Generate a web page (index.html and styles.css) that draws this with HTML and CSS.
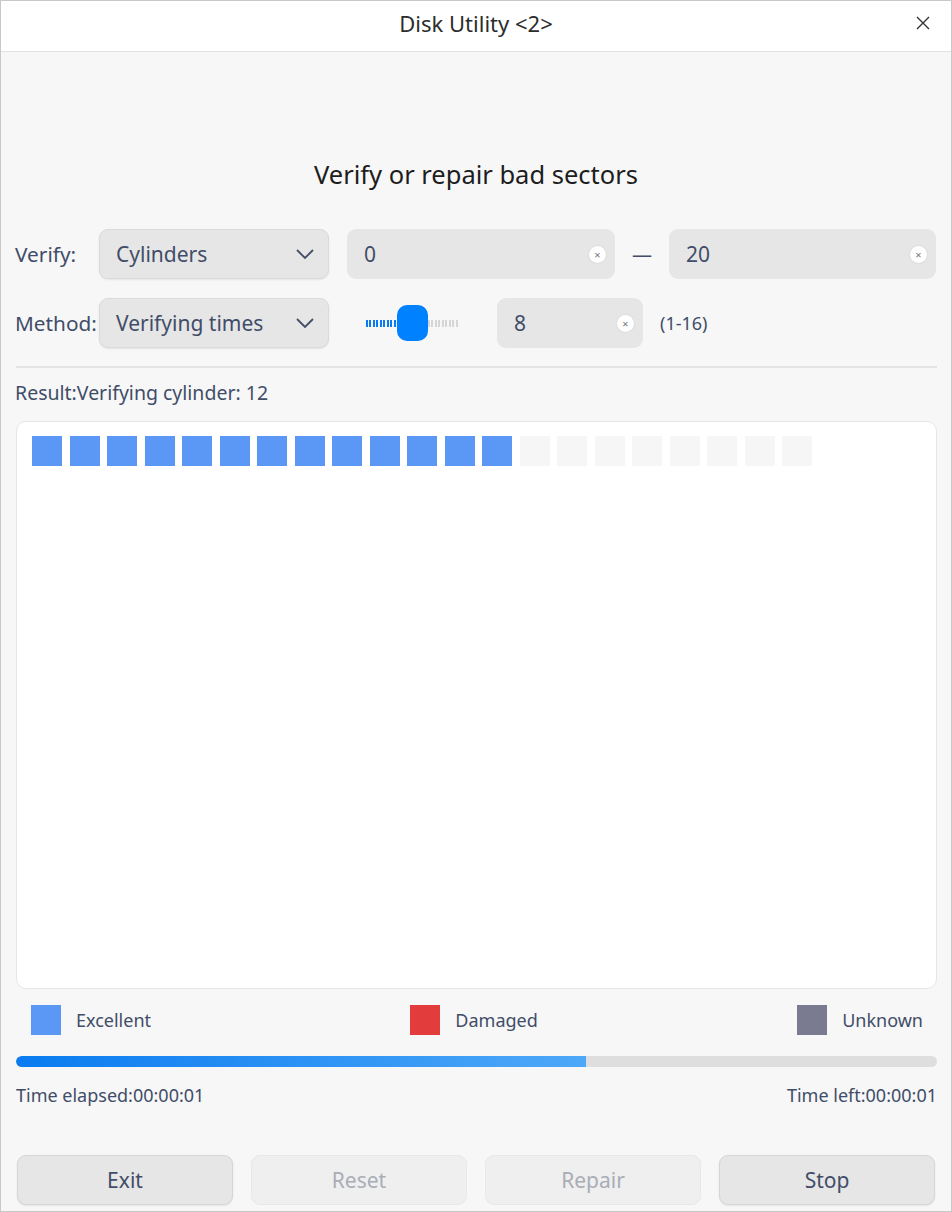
FILE: index.html
```html
<!DOCTYPE html>
<html>
<head>
<meta charset="utf-8">
<link rel="stylesheet" href="styles.css">
</head>
<body>
<div class="window">
  <div class="titlebar">
    <span class="title">Disk Utility &lt;2&gt;</span>
    <span class="close">
      <svg width="14" height="14" viewBox="0 0 14 14"><path d="M1 1 L13 13 M13 1 L1 13" stroke="#333" stroke-width="1.4" fill="none"/></svg>
    </span>
  </div>
  <div class="content">
    <h1 class="heading">Verify or repair bad sectors</h1>

    <div class="row row1">
      <span class="label">Verify:</span>
      <div class="combo">
        <span>Cylinders</span>
        <svg class="chev" width="18" height="10" viewBox="0 0 18 10"><path d="M1 1 L9 9 L17 1" stroke="#414d68" stroke-width="1.8" fill="none"/></svg>
      </div>
      <div class="input in-from"><span>0</span><span class="clear">×</span></div>
      <span class="dash">—</span>
      <div class="input in-to"><span>20</span><span class="clear">×</span></div>
    </div>

    <div class="row row2">
      <span class="label">Method:</span>
      <div class="combo">
        <span>Verifying times</span>
        <svg class="chev" width="18" height="10" viewBox="0 0 18 10"><path d="M1 1 L9 9 L17 1" stroke="#414d68" stroke-width="1.8" fill="none"/></svg>
      </div>
      <div class="slider">
        <div class="track-left"></div>
        <div class="handle"></div>
        <div class="track-right"></div>
      </div>
      <div class="input in-times"><span>8</span><span class="clear">×</span></div>
      <span class="range">(1-16)</span>
    </div>

    <div class="sep"></div>

    <div class="result">Result:Verifying cylinder: 12</div>

    <div class="map">
      <div class="blocks">
        <i class="b ok"></i><i class="b ok"></i><i class="b ok"></i><i class="b ok"></i><i class="b ok"></i><i class="b ok"></i><i class="b ok"></i><i class="b ok"></i><i class="b ok"></i><i class="b ok"></i><i class="b ok"></i><i class="b ok"></i><i class="b ok"></i><i class="b todo"></i><i class="b todo"></i><i class="b todo"></i><i class="b todo"></i><i class="b todo"></i><i class="b todo"></i><i class="b todo"></i><i class="b todo"></i>
      </div>
    </div>

    <div class="legend">
      <div class="leg"><i class="sw ok"></i><span>Excellent</span></div>
      <div class="leg"><i class="sw bad"></i><span>Damaged</span></div>
      <div class="leg"><i class="sw unk"></i><span>Unknown</span></div>
    </div>

    <div class="progress"><div class="fill" style="width: 61.9%"></div></div>

    <div class="times">
      <span>Time elapsed:00:00:01</span>
      <span>Time left:00:00:01</span>
    </div>

    <div class="buttons">
      <button class="btn">Exit</button>
      <button class="btn disabled">Reset</button>
      <button class="btn disabled">Repair</button>
      <button class="btn">Stop</button>
    </div>
  </div>
</div>
</body>
</html>
```

FILE: styles.css
```css
* { box-sizing: border-box; }
html, body { margin: 0; padding: 0; }
body {
  font-family: "Noto Sans", "Open Sans", sans-serif;
  color: #414d68;
  background: #f7f7f7;
}
.window {
  width: 952px;
  height: 1212px;
  border: 1px solid #c8c8c8;
  background: #f7f7f7;
  display: flex;
  flex-direction: column;
}
.titlebar {
  height: 51px;
  flex: none;
  background: #ffffff;
  border-bottom: 1px solid #e2e2e2;
  display: flex;
  align-items: center;
  justify-content: center;
  position: relative;
}
.title {
  font-size: 22px;
  color: #2c2c2c;
  margin-top: -6px;
}
.close {
  position: absolute;
  right: 21px;
  top: 15px;
  width: 14px;
  height: 14px;
  display: flex;
}
.content {
  flex: 1;
  padding: 0 14px 0 14px;
  display: flex;
  flex-direction: column;
}
.heading {
  margin: 106px 0 0 0;
  font-size: 25.5px;
  font-weight: 400;
  line-height: 32px;
  text-align: center;
  color: #1d1d1d;
}
.row {
  display: flex;
  align-items: center;
  height: 50px;
}
.row1 { margin-top: 39px; }
.row2 { margin-top: 19px; }
.label {
  font-size: 20.8px;
  width: 84px;
  flex: none;
}
.combo {
  width: 230px;
  height: 50px;
  flex: none;
  border-radius: 9px;
  background: #e6e6e6;
  border: 1px solid #dadada;
  box-shadow: 0 1px 2px rgba(0,0,0,0.08);
  display: flex;
  align-items: center;
  justify-content: space-between;
  padding: 0 14px 0 16px;
  font-size: 21px;
}
.chev { flex: none; }
.input {
  height: 50px;
  border-radius: 9px;
  background: #e6e6e6;
  display: flex;
  align-items: center;
  justify-content: space-between;
  padding: 0 9px 0 17px;
  font-size: 21px;
  flex: none;
}
.in-from { width: 268px; margin-left: 18px; }
.in-to { width: 267px; }
.in-times { width: 146px; margin-left: 38px; }
.clear {
  width: 17px;
  height: 17px;
  border-radius: 50%;
  background: #ffffff;
  color: #777;
  font-size: 11px;
  line-height: 17px;
  text-align: center;
  box-shadow: 0 0 2px rgba(0,0,0,0.12);
}
.dash {
  width: 54px;
  text-align: center;
  font-size: 20px;
  color: #414d68;
  flex: none;
}
.slider {
  margin-left: 37px;
  width: 93px;
  height: 38px;
  display: flex;
  align-items: center;
  flex: none;
}
.track-left, .track-right {
  height: 7px;
  width: 31px;
  background: repeating-linear-gradient(90deg, #0a7cf0 0 2px, transparent 2px 3.5px);
}
.track-right {
  width: 31px;
  background: repeating-linear-gradient(90deg, #d6d6d6 0 2px, transparent 2px 3.5px);
}
.handle {
  width: 31px;
  height: 36px;
  border-radius: 10px;
  background: #0081ff;
  flex: none;
}
.range {
  margin-left: 17px;
  font-size: 18px;
}
.sep {
  margin-top: 18px;
  height: 2px;
  background: #e4e4e4;
  margin-left: 1px;
  margin-right: 0;
}
.result {
  margin-top: 13px;
  font-size: 19.5px;
  line-height: 24px;
}
.map {
  margin-top: 16px;
  margin-left: 1px;
  height: 568px;
  background: #ffffff;
  border: 1px solid #e6e6e6;
  border-radius: 10px;
  padding: 14px 0 0 15px;
}
.blocks {
  display: flex;
  gap: 7.5px;
}
.b {
  width: 30px;
  height: 30px;
  display: block;
  flex: none;
}
.b.ok { background: #5b97f5; }
.b.todo { background: #f6f6f6; }
.legend {
  margin-top: 16px;
  height: 30px;
  display: flex;
  justify-content: space-between;
  padding: 0 14px 0 16px;
}
.leg {
  display: flex;
  align-items: center;
  font-size: 18px;
}
.sw {
  width: 30px;
  height: 30px;
  display: block;
  margin-right: 15px;
}
.sw.ok { background: #5b97f5; }
.sw.bad { background: #e23c3c; }
.sw.unk { background: #7a7b90; }
.progress {
  margin-top: 21px;
  height: 11px;
  border-radius: 6px;
  background: #dedede;
  overflow: hidden;
  margin-left: 1px;
}
.fill {
  height: 100%;
  border-radius: 6px 0 0 6px;
  background: linear-gradient(90deg, #0a7cf0, #4ea8f8);
}
.times {
  margin-top: 16px;
  display: flex;
  justify-content: space-between;
  font-size: 18px;
  line-height: 24px;
  padding-left: 1px;
}
.buttons {
  margin-top: 48px;
  display: flex;
  gap: 18px;
  padding-left: 2px;
}
.btn {
  width: 216px;
  height: 50px;
  border-radius: 9px;
  background: #e6e6e6;
  border: 1px solid #d6d6d6;
  box-shadow: 0 1px 2px rgba(0,0,0,0.08);
  font-family: "Noto Sans", "Open Sans", sans-serif;
  font-size: 21px;
  color: #414d68;
}
.btn.disabled {
  background: #efefef;
  border-color: #e8e8e8;
  box-shadow: none;
  color: #a9adb6;
}
```
